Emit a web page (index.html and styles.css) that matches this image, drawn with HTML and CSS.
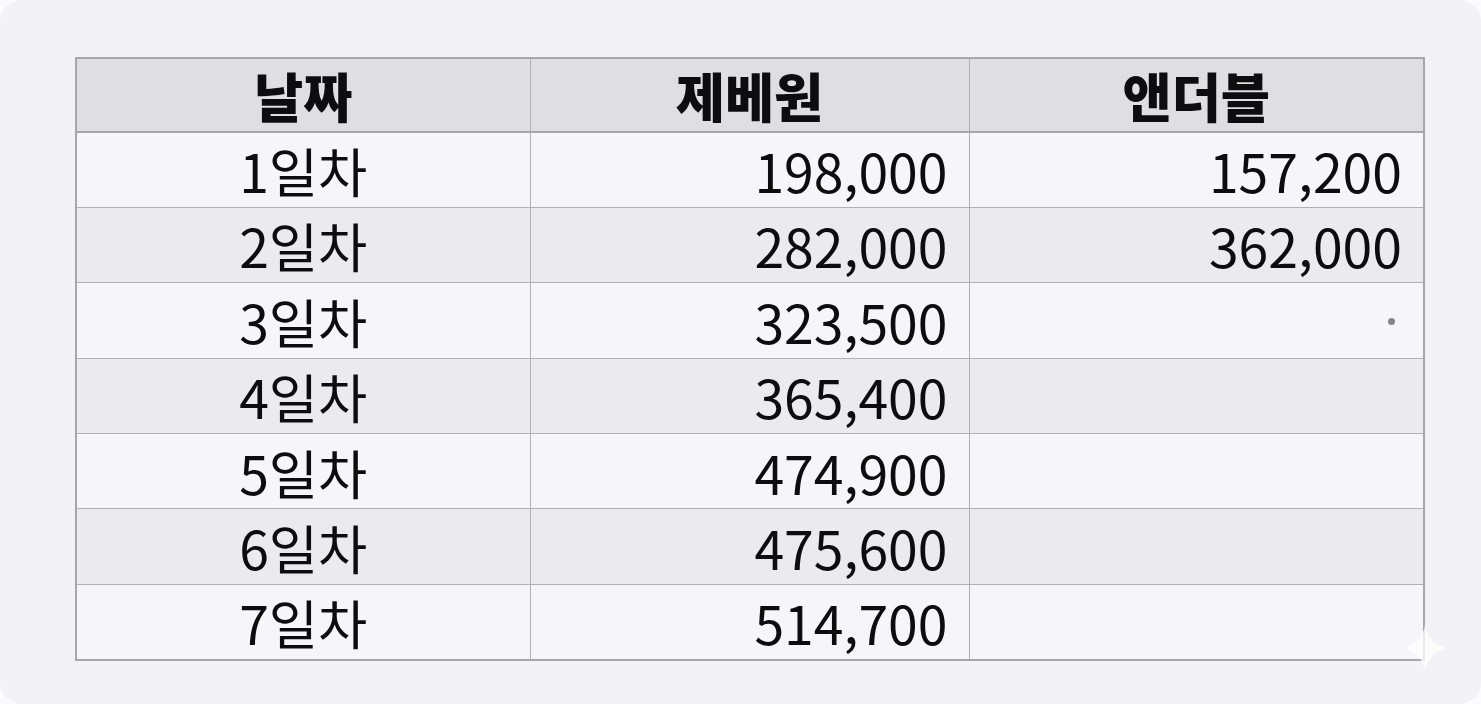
FILE: index.html
```html
<!DOCTYPE html>
<html lang="ko">
<head>
<meta charset="utf-8">
<link rel="stylesheet" href="styles.css">
</head>
<body>
<div class="card">
  <table class="data">
    <colgroup>
      <col class="c1"><col class="c2"><col class="c3">
    </colgroup>
    <thead>
      <tr><th>날짜</th><th>제베원</th><th>앤더블</th></tr>
    </thead>
    <tbody>
      <tr><td class="day">1일차</td><td class="num">198,000</td><td class="num">157,200</td></tr>
      <tr><td class="day">2일차</td><td class="num">282,000</td><td class="num">362,000</td></tr>
      <tr><td class="day">3일차</td><td class="num">323,500</td><td class="num"><span class="dot"></span></td></tr>
      <tr><td class="day">4일차</td><td class="num">365,400</td><td class="num"></td></tr>
      <tr><td class="day">5일차</td><td class="num">474,900</td><td class="num"></td></tr>
      <tr><td class="day">6일차</td><td class="num">475,600</td><td class="num"></td></tr>
      <tr><td class="day">7일차</td><td class="num">514,700</td><td class="num"></td></tr>
    </tbody>
  </table>
  <svg class="sparkle" width="48" height="48" viewBox="0 0 48 48" aria-hidden="true">
    <path d="M24 0 C25 13 35 23 48 24 C35 25 25 35 24 48 C23 35 13 25 0 24 C13 23 23 13 24 0 Z" fill="#ffffff" fill-opacity="0.75"/>
  </svg>
</div>
</body>
</html>
```
FILE: styles.css
```css
html, body {
  margin: 0;
  padding: 0;
  background: #fbfbfd;
}
body {
  width: 1481px;
  height: 704px;
  overflow: hidden;
  font-family: "Noto Sans CJK KR", "Noto Sans", sans-serif;
  color: #0d0d10;
}
.card {
  position: relative;
  box-sizing: border-box;
  width: 1481px;
  height: 704px;
  border-radius: 22px;
  background: #f3f3f7;
  padding: 57px 58px 0 75px;
}
.data {
  border-collapse: collapse;
  width: 1348px;
  table-layout: fixed;
  border: 2px solid #a6a6ad;
}
.c1 { width: 454px; }
.c2 { width: 439px; }
.c3 { width: 455px; }
.data th, .data td {
  border: 1.5px solid #b0b0b7;
  height: 75.4px;
  box-sizing: border-box;
  padding: 0 21px;
  font-size: 53.5px;
  line-height: 1;
}
.data th {
  background: #dedee3;
  font-weight: 900;
  text-align: center;
  height: 74px;
}
.data thead tr th { border-bottom: 2px solid #a6a6ad; }
.data tbody tr:nth-child(odd) td { background: #f6f6fa; }
.data tbody tr:nth-child(even) td { background: #ebebef; }
.day { text-align: center; font-weight: 400; }
.num { text-align: right; font-weight: 400; }
.dot {
  display: inline-block;
  width: 7px;
  height: 7px;
  border-radius: 50%;
  background: #85858b;
  margin-right: 7px;
  position: relative;
  top: -19px;
}
.sparkle {
  position: absolute;
  left: 1401px;
  top: 624px;
}
```
